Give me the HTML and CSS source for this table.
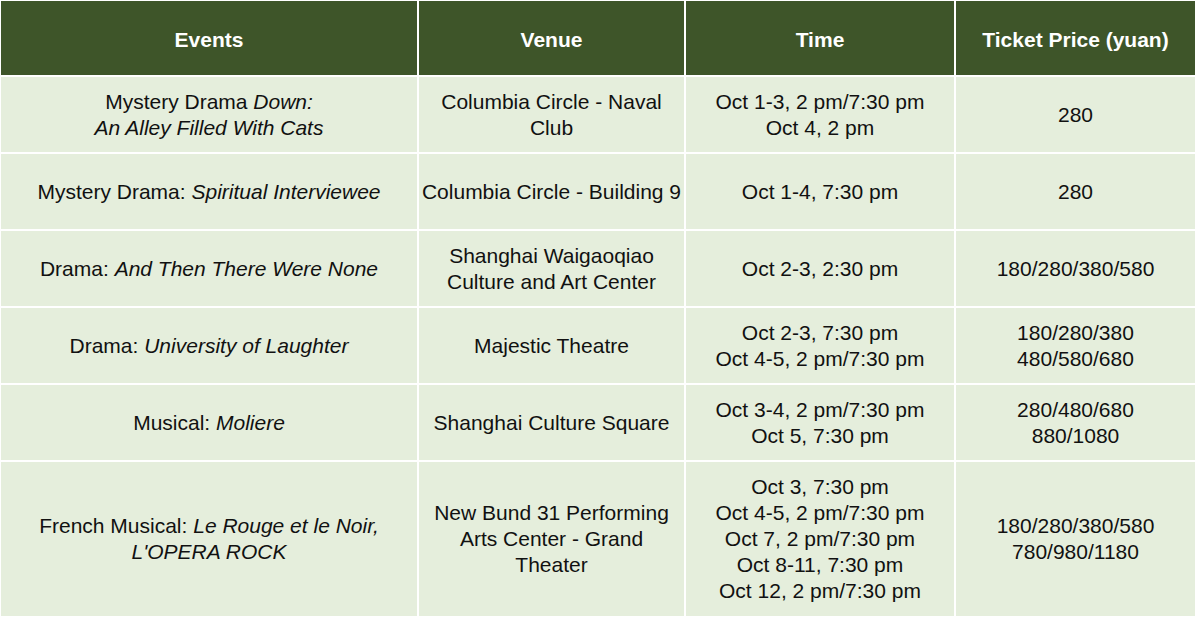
FILE: index.html
```html
<!DOCTYPE html>
<html lang="en">
<head>
<meta charset="utf-8">
<title>Events</title>
<link rel="stylesheet" href="styles.css">
</head>
<body>
<div class="wrap">
<table class="events">
  <colgroup>
    <col class="c1"><col class="c2"><col class="c3"><col class="c4">
  </colgroup>
  <thead>
    <tr class="head">
      <th>Events</th>
      <th>Venue</th>
      <th>Time</th>
      <th>Ticket Price (yuan)</th>
    </tr>
  </thead>
  <tbody>
    <tr class="row">
      <td>Mystery Drama <i>Down:</i><br><i>An Alley Filled With Cats</i></td>
      <td>Columbia Circle - Naval<br>Club</td>
      <td>Oct 1-3, 2 pm/7:30 pm<br>Oct 4, 2 pm</td>
      <td>280</td>
    </tr>
    <tr class="row">
      <td>Mystery Drama: <i>Spiritual Interviewee</i></td>
      <td class="nowrap">Columbia Circle - Building 9</td>
      <td>Oct 1-4, 7:30 pm</td>
      <td>280</td>
    </tr>
    <tr class="row">
      <td>Drama: <i>And Then There Were None</i></td>
      <td>Shanghai Waigaoqiao<br>Culture and Art Center</td>
      <td>Oct 2-3, 2:30 pm</td>
      <td>180/280/380/580</td>
    </tr>
    <tr class="row">
      <td>Drama: <i>University of Laughter</i></td>
      <td>Majestic Theatre</td>
      <td>Oct 2-3, 7:30 pm<br>Oct 4-5, 2 pm/7:30 pm</td>
      <td>180/280/380<br>480/580/680</td>
    </tr>
    <tr class="row">
      <td>Musical: <i>Moliere</i></td>
      <td>Shanghai Culture Square</td>
      <td>Oct 3-4, 2 pm/7:30 pm<br>Oct 5, 7:30 pm</td>
      <td>280/480/680<br>880/1080</td>
    </tr>
    <tr class="row tall">
      <td>French Musical: <i>Le Rouge et le Noir,</i><br><i>L'OPERA ROCK</i></td>
      <td>New Bund 31 Performing<br>Arts Center - Grand<br>Theater</td>
      <td>Oct 3, 7:30 pm<br>Oct 4-5, 2 pm/7:30 pm<br>Oct 7, 2 pm/7:30 pm<br>Oct 8-11, 7:30 pm<br>Oct 12, 2 pm/7:30 pm</td>
      <td>180/280/380/580<br>780/980/1180</td>
    </tr>
  </tbody>
</table>
</div>
</body>
</html>
```

FILE: styles.css
```css
html, body {
  margin: 0;
  padding: 0;
  background: #ffffff;
}

.wrap {
  padding: 0;
}

.events {
  width: 1198px;
  margin: -1px 0 0 -1px;
  border-collapse: separate;
  border-spacing: 2px;
  table-layout: fixed;
  font-family: "Liberation Sans", Arial, sans-serif;
  font-size: 21px;
  line-height: 26px;
  color: #111111;
}

.c1 { width: 416px; }
.c2 { width: 265px; }
.c3 { width: 268px; }
.c4 { width: 239px; }

.events th,
.events td {
  text-align: center;
  vertical-align: middle;
  padding: 0 2px;
}

.events td.nowrap {
  white-space: nowrap;
  padding: 0;
}

.head th {
  background: #3e5529;
  color: #ffffff;
  font-weight: bold;
  height: 74px;
  padding-top: 4px;
  box-sizing: border-box;
}

.row td {
  background: #e5eedc;
  height: 75px;
}

.row.tall td {
  height: 154px;
}

.events i {
  font-style: italic;
}
```
